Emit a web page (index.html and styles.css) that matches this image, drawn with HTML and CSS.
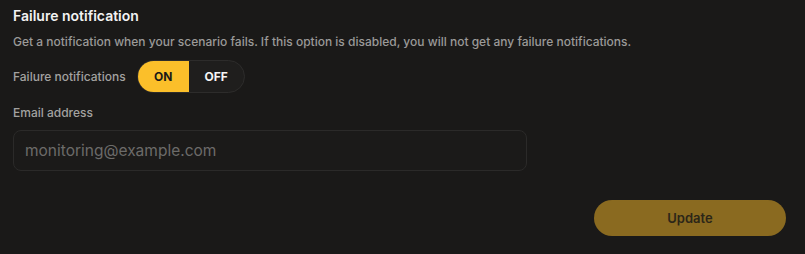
FILE: index.html
```html
<!DOCTYPE html>
<html>
<head>
  <meta charset="utf-8">
  <title>Failure notification</title>
  <link rel="stylesheet" href="styles.css">
</head>
<body>
  <section class="settings">
    <h2 class="title">Failure notification</h2>
    <p class="desc">Get a notification when your scenario fails. If this option is disabled, you will not get any failure notifications.</p>
    <div class="toggle-row">
      <span class="label">Failure notifications</span>
      <div class="toggle">
        <span class="seg on">ON</span>
        <span class="seg off">OFF</span>
      </div>
    </div>
    <label class="label email-label">Email address</label>
    <input class="email" type="text" placeholder="monitoring@example.com">
    <div class="actions">
      <button class="update">Update</button>
    </div>
  </section>
</body>
</html>
```

FILE: styles.css
```css
body, html {
  margin: 0;
  padding: 0;
  background: #1a1918;
  color: #eee;
  font-family: Inter, "Noto Sans", sans-serif;
}
.settings {
  display: flex;
  flex-direction: column;
  padding: 6px 19px 0 13px;
}
.title {
  margin: 0;
  font-size: 14px;
  line-height: 20px;
  font-weight: 600;
  color: #f2f2f2;
}
.desc {
  margin: 6px 0 0 0;
  font-size: 12px;
  line-height: 20px;
  font-weight: 500;
  color: #9b9a98;
}
.toggle-row {
  display: flex;
  align-items: center;
  gap: 11px;
  margin-top: 8px;
}
.label {
  font-size: 12px;
  line-height: 16px;
  font-weight: 500;
  color: #a3a2a0;
}
.toggle {
  display: flex;
  height: 33px;
  width: 108px;
  box-sizing: border-box;
  border: 1px solid #2d2c2b;
  border-radius: 17px;
  overflow: hidden;
  background: #1f1e1d;
}
.seg {
  display: flex;
  align-items: center;
  justify-content: center;
  font-size: 12px;
  font-weight: 700;
}
.seg.on {
  width: 51px;
  background: #fbbf2a;
  color: #1a1918;
}
.seg.off {
  flex: 1;
  color: #f5f5f5;
}
.email-label {
  margin-top: 12px;
}
.email {
  margin-top: 9px;
  width: 514px;
  height: 41px;
  box-sizing: border-box;
  background: #1b1a19;
  border: 1px solid #2b2a29;
  border-radius: 8px;
  padding: 0 11px;
  font-family: Inter, "Noto Sans", sans-serif;
  font-size: 15.5px;
  color: #ddd;
  outline: none;
}
.email::placeholder {
  color: #6c6b69;
}
.actions {
  display: flex;
  justify-content: flex-end;
  margin-top: 29px;
}
.update {
  width: 192px;
  height: 36px;
  border: none;
  border-radius: 18px;
  background: #8a6a20;
  color: #2c2618;
  font-family: Inter, "Noto Sans", sans-serif;
  font-size: 13px;
  font-weight: 600;
}
```
